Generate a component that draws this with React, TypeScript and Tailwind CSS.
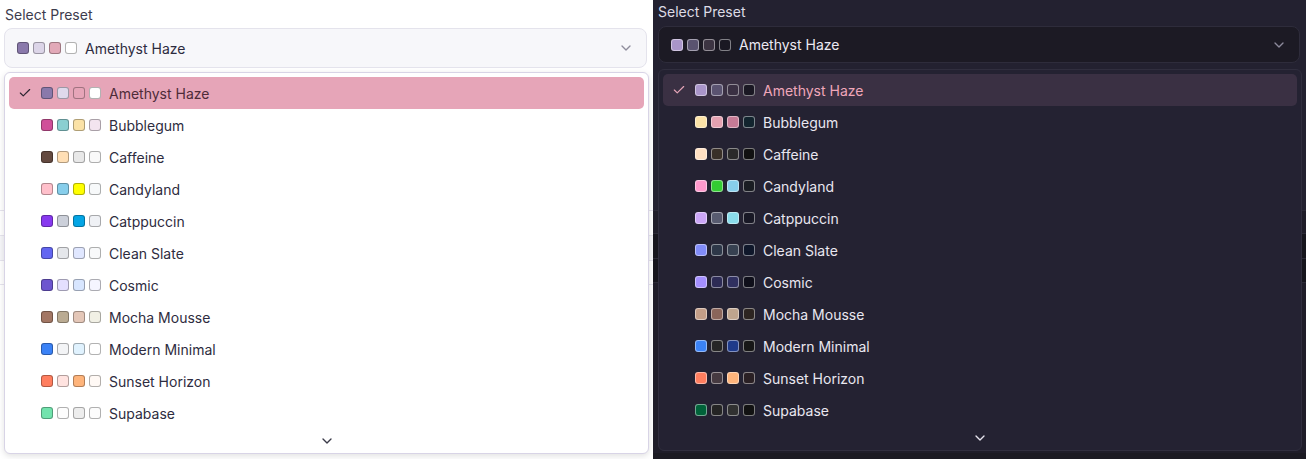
import React from "react";
import { Check, ChevronDown } from "lucide-react";

type Preset = { name: string; light: string[]; dark: string[] };

const presets: Preset[] = [
  { name: "Amethyst Haze", light: ["#8a79ab", "#dfd9ec", "#e6a5b8", "#ffffff"], dark: ["#a995c9", "#5a5370", "#3a3043", "#1a1823"] },
  { name: "Bubblegum", light: ["#d04f99", "#8acfd1", "#fbe2a7", "#f3e4ef"], dark: ["#fbe2a7", "#e4a2b1", "#c67b96", "#12242e"] },
  { name: "Caffeine", light: ["#644a40", "#ffdfb5", "#e8e8e8", "#f9f9f9"], dark: ["#ffe0c2", "#393028", "#2a2a2a", "#111111"] },
  { name: "Candyland", light: ["#ffc0cb", "#87ceeb", "#ffff00", "#f7f9fa"], dark: ["#ff99cc", "#33cc33", "#87ceeb", "#1a1d23"] },
  { name: "Catppuccin", light: ["#8839ef", "#ccd0da", "#04a5e5", "#eff1f5"], dark: ["#cba6f7", "#585b70", "#89dceb", "#181825"] },
  { name: "Clean Slate", light: ["#6366f1", "#e5e7eb", "#e0e7ff", "#f8f9fa"], dark: ["#818cf8", "#2d3748", "#374151", "#0f172a"] },
  { name: "Cosmic", light: ["#6e56cf", "#e4dfff", "#d8e6ff", "#f5f5ff"], dark: ["#a48fff", "#2d2b55", "#303060", "#0f0f1a"] },
  { name: "Mocha Mousse", light: ["#a37764", "#baab92", "#e4c7b8", "#f1f0e5"], dark: ["#c39e88", "#8a655a", "#bfa58e", "#2d2521"] },
  { name: "Modern Minimal", light: ["#3b82f6", "#f3f4f6", "#e0f2fe", "#ffffff"], dark: ["#3b82f6", "#262626", "#1e3a8a", "#171717"] },
  { name: "Sunset Horizon", light: ["#ff7e5f", "#ffe3e0", "#feb47b", "#fff9f5"], dark: ["#ff7e5f", "#463a41", "#feb47b", "#2a2024"] },
  { name: "Supabase", light: ["#72e3ad", "#fdfdfd", "#ededed", "#fcfcfc"], dark: ["#006239", "#242424", "#313131", "#121212"] },
];

const triggerLight = ["#8a79ab", "#dcd5e8", "#e2a9b8", "#ffffff"];
const triggerDark = ["#a995c9", "#5a5370", "#3c3442", "#1a1823"];

function Swatches({ colors, dark }: { colors: string[]; dark?: boolean }) {
  return (
    <div className="flex items-center gap-1">
      {colors.map((c, i) => (
        <span
          key={i}
          className={
            dark
              ? "block h-3 w-3 rounded-[3px] border border-white/45"
              : "block h-3 w-3 rounded-[3px] border border-black/30"
          }
          style={{ backgroundColor: c }}
        />
      ))}
    </div>
  );
}

function LightPanel() {
  return (
    <div className="relative h-[459px] w-[653px] overflow-hidden bg-white text-[14px] text-[#2e2c40]">
      <div className="pl-[5px] pt-[5px] leading-5 text-[#3d3c4d]">Select Preset</div>
      <div className="ml-1 mt-[3px] flex h-10 w-[643px] items-center rounded-lg border border-[#e4e3ec] bg-[#f7f7fa] px-3">
        <Swatches colors={triggerLight} />
        <span className="ml-2 flex-1 text-[#2d2b3e]">Amethyst Haze</span>
        <ChevronDown size={16} className="text-[#8e8c9c]" />
      </div>
      {/* background content behind the popover */}
      <div className="mt-[142px] flex flex-col">
        <div className="h-[25px] border-t border-[#e6e4ee]" />
        <div className="h-[25px] border-t border-[#e6e4ee] bg-[#f6f6f9]" />
        <div className="h-[25px] border-y border-[#e6e4ee]" />
      </div>
      <div className="absolute left-1 top-[72px] w-[645px] rounded-md border border-[#d8d4e6] bg-white shadow-[0_2px_6px_rgba(0,0,0,0.12)]">
        <div className="flex flex-col px-1 pt-1">
          {presets.map((p, i) => (
            <div
              key={p.name}
              className={
                i === 0
                  ? "flex h-8 items-center rounded-[5px] bg-[#e6a5b8] pl-2 text-[#4e2b38]"
                  : "flex h-8 items-center rounded-[5px] pl-2"
              }
            >
              <span className="flex w-4 items-center justify-center">
                {i === 0 && <Check size={14} strokeWidth={2} className="text-[#2c2430]" />}
              </span>
              <span className="ml-2">
                <Swatches colors={p.light} />
              </span>
              <span className="ml-2">{p.name}</span>
            </div>
          ))}
        </div>
        <div className="flex h-6 items-center justify-center">
          <ChevronDown size={16} className="text-[#3a3a48]" />
        </div>
      </div>
    </div>
  );
}

function DarkPanel() {
  return (
    <div className="relative h-[459px] w-[653px] overflow-hidden bg-[#232130] text-[14px] text-[#e9e7f0]">
      <div className="pl-[5px] pt-[2px] leading-5 text-[#dddbe6]">Select Preset</div>
      <div className="ml-[5px] mt-1 flex h-[37px] w-[642px] items-center rounded-lg border border-[#2e2c3b] bg-[#1c1a24] px-3">
        <Swatches colors={triggerDark} dark />
        <span className="ml-2 flex-1 text-[#ebe9f2]">Amethyst Haze</span>
        <ChevronDown size={16} className="text-[#8d8a9c]" />
      </div>
      {/* background content behind the popover */}
      <div className="mt-[147px] flex flex-col bg-[#1f1d29]">
        <div className="h-[23px] border-t border-[#2c2a37]" />
        <div className="h-[25px] border-t border-[#2c2a37] bg-[#16151d]" />
        <div className="h-[25px] border-y border-[#2c2a37] bg-[#16151d]" />
        <div className="h-[170px] bg-[#1f1d29]" />
      </div>
      <div className="absolute left-[5px] top-[69px] w-[644px] rounded-md border border-[#302e3e] bg-[#242232]">
        <div className="flex flex-col px-1 pt-1">
          {presets.map((p, i) => (
            <div
              key={p.name}
              className={
                i === 0
                  ? "flex h-8 items-center rounded-[5px] bg-[#3a3043] pl-2 text-[#f0a7ba]"
                  : "flex h-8 items-center rounded-[5px] pl-2"
              }
            >
              <span className="flex w-4 items-center justify-center">
                {i === 0 && <Check size={14} strokeWidth={2} className="text-[#e6a5b8]" />}
              </span>
              <span className="ml-2">
                <Swatches colors={p.dark} dark />
              </span>
              <span className="ml-2">{p.name}</span>
            </div>
          ))}
        </div>
        <div className="flex h-6 items-center justify-center">
          <ChevronDown size={16} className="text-[#e6e4ee]" />
        </div>
      </div>
      <div className="absolute bottom-0 left-0 h-[6px] w-full bg-[#1b1a22]" />
    </div>
  );
}

export default function App() {
  return (
    <div
      className="flex h-[459px] w-[1306px] overflow-hidden"
      style={{ fontFamily: "Inter, 'Noto Sans', sans-serif" }}
    >
      <LightPanel />
      <DarkPanel />
    </div>
  );
}
